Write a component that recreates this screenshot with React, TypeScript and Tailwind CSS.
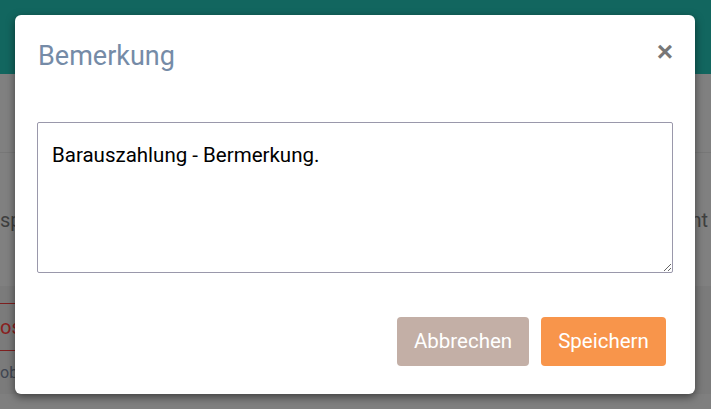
import React from "react";

export default function App() {
  return (
    <div className="relative w-[711px] h-[409px] overflow-hidden bg-[#808080]" style={{ fontFamily: "Roboto, 'Liberation Sans', sans-serif" }}>
      {/* background page under overlay */}
      <div className="flex flex-col h-full">
        <div className="h-[74px] bg-[#12665f]" />
        <div className="h-[79px] border-b border-[#777]" />
        <div className="h-[133px] flex items-center justify-between text-[20px] text-[#3f3f3f]">
          <span className="pl-[0px]">sp</span>
          <span className="pr-[3px]">nt</span>
        </div>
        <div className="flex-1 bg-[#7b7b7b] flex flex-col">
          <div className="h-[17px]" />
          <div className="w-[300px] h-[48px] border-y border-[#7e2020] flex items-center text-[20px] text-[#8a2020]">os</div>
          <div className="h-[43px] flex items-center text-[16px] text-[#404652]">ob</div>
          <div className="flex-1 bg-[#7f7f7f]" />
        </div>
      </div>

      {/* modal */}
      <div className="absolute left-[15px] top-[15px] w-[680px] h-[379px] bg-white rounded-[6px] shadow-[0_3px_9px_rgba(0,0,0,0.5)] flex flex-col">
        <div className="flex items-start justify-between pl-[23px] pr-[22px] h-[80px]">
          <h4 className="mt-[28px] text-[27px] text-[#758ba7] leading-none">Bemerkung</h4>
          <span className="mt-[23px] text-[28px] font-bold text-[#777] leading-none" style={{ fontFamily: "Arial, 'Liberation Sans', sans-serif" }}>×</span>
        </div>
        <div className="px-[22px] pt-[27px]">
          <textarea
            className="block w-[636px] h-[151px] border border-[#9a98ab] rounded-[2px] px-[14px] pt-[17px] text-[20.5px] text-black outline-none"
            defaultValue="Barauszahlung - Bermerkung."
            style={{ fontFamily: "Roboto, 'Liberation Sans', sans-serif" }}
          />
        </div>
        <div className="flex justify-end gap-[12px] pr-[29px] pt-[44px]">
          <button className="w-[132px] h-[49px] rounded-[4px] bg-[#c3afa6] text-white text-[20.5px]">Abbrechen</button>
          <button className="w-[125px] h-[49px] rounded-[4px] bg-[#f8954b] text-white text-[20.5px]">Speichern</button>
        </div>
      </div>
    </div>
  );
}
